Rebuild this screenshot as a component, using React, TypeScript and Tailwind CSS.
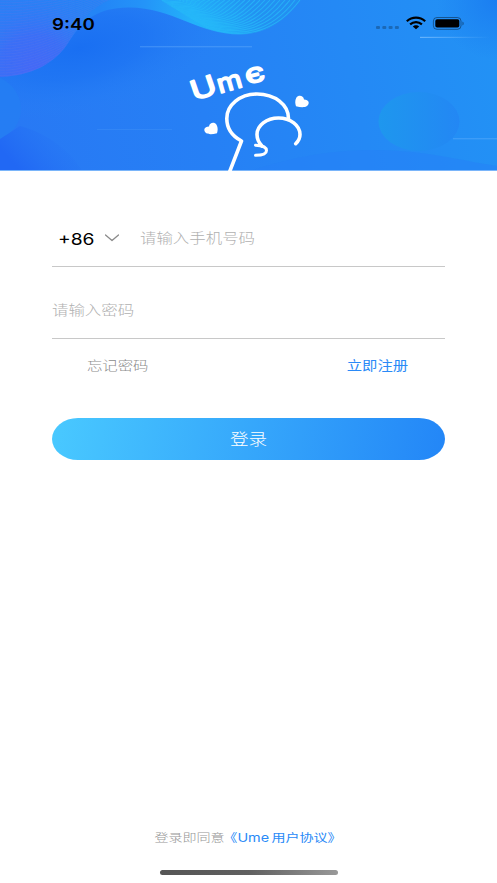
import React from "react";

const waveLines = Array.from({ length: 30 }, (_, i) => i);
const arcLines = Array.from({ length: 25 }, (_, i) => i);

function HeaderArt() {
  return (
    <svg
      className="absolute inset-0 h-full w-full"
      viewBox="0 0 497 171"
      preserveAspectRatio="none"
      fill="none"
      aria-hidden="true"
    >
      <defs>
        <linearGradient id="base" x1="0" y1="140" x2="497" y2="30" gradientUnits="userSpaceOnUse">
          <stop offset="0" stopColor="#2878f4" />
          <stop offset="0.4" stopColor="#2680f5" />
          <stop offset="1" stopColor="#2292f5" />
        </linearGradient>
        <radialGradient
          id="deep"
          cx="0"
          cy="0"
          r="1"
          gradientUnits="userSpaceOnUse"
          gradientTransform="translate(80 48) rotate(-12) scale(150 65)"
        >
          <stop offset="0" stopColor="#196ff2" />
          <stop offset="0.45" stopColor="#1d74f3" stopOpacity="0.75" />
          <stop offset="1" stopColor="#2680f5" stopOpacity="0" />
        </radialGradient>
        <linearGradient id="wave" x1="0" y1="0" x2="301" y2="0" gradientUnits="userSpaceOnUse">
          <stop offset="0" stopColor="#2a80f6" />
          <stop offset="0.33" stopColor="#2385f6" />
          <stop offset="0.48" stopColor="#2494f8" />
          <stop offset="0.64" stopColor="#23b2fa" />
          <stop offset="0.78" stopColor="#22aef8" />
          <stop offset="1" stopColor="#2490f4" />
        </linearGradient>
        <radialGradient id="violet" cx="35" cy="72" r="82" gradientUnits="userSpaceOnUse">
          <stop offset="0" stopColor="#4568f7" />
          <stop offset="0.45" stopColor="#3d6cf7" stopOpacity="0.85" />
          <stop offset="1" stopColor="#2b80f5" stopOpacity="0" />
        </radialGradient>
        <linearGradient id="mesh" x1="215" y1="30" x2="245" y2="0" gradientUnits="userSpaceOnUse">
          <stop offset="0" stopColor="#228df0" stopOpacity="0" />
          <stop offset="1" stopColor="#228df0" stopOpacity="0.8" />
        </linearGradient>
        <linearGradient id="oval" x1="378" y1="0" x2="460" y2="0" gradientUnits="userSpaceOnUse">
          <stop offset="0" stopColor="#1e97ee" />
          <stop offset="1" stopColor="#2387f4" />
        </linearGradient>
        <linearGradient id="corner" x1="15" y1="165" x2="60" y2="125" gradientUnits="userSpaceOnUse">
          <stop offset="0" stopColor="#2168f4" />
          <stop offset="1" stopColor="#2674f4" stopOpacity="0" />
        </linearGradient>
        <linearGradient id="streak">
          <stop offset="0" stopColor="#7cc0ff" stopOpacity="0.75" />
          <stop offset="1" stopColor="#7cc0ff" stopOpacity="0" />
        </linearGradient>
        <radialGradient id="topRight" cx="497" cy="0" r="60" gradientUnits="userSpaceOnUse">
          <stop offset="0" stopColor="#1b7ef1" />
          <stop offset="1" stopColor="#1b7ef1" stopOpacity="0" />
        </radialGradient>
        <clipPath id="waveClip">
          <path d="M0 0H110C90 8 78 24 70 40C56 64 30 76 0 77Z" />
        </clipPath>
        <clipPath id="meshClip">
          <path d="M160 0C188 22 212 34 240 34.500C268 34 286 19 301 0Z" />
        </clipPath>
      </defs>

      <rect width="497" height="171" fill="url(#base)" />
      <rect width="260" height="171" fill="url(#deep)" />
      <rect x="430" width="67" height="60" fill="url(#topRight)" />
      <path d="M0 78C14 84 21 97 21 109C21 123 12 134 0 139Z" fill="#247ff2" fillOpacity="0.7" />
      <path d="M0 139L20 126C48 133 72 153 82 171H0Z" fill="url(#corner)" />
      <path d="M250 171C300 154 350 147 400 151C440 154 470 162 497 166V171Z" fill="#2680f8" fillOpacity="0.5" />

      <path
        d="M0 0V77C30 76 56 64 70 40C84 19 98 8 128 7.500C172 7 198 34.500 240 34.500C268 34 286 19 301 0Z"
        fill="url(#wave)"
      />
      <path d="M0 0V77C30 76 56 64 70 40C84 19 98 8 128 7.500V0Z" fill="url(#violet)" />
      <g clipPath="url(#waveClip)" stroke="#5a78e8" strokeOpacity="0.4" strokeWidth="0.8">
        {waveLines.map((i) => (
          <path key={i} d={`M0 ${i * 2.7}C30 ${i * 2.7 + 1} 60 ${i * 2.3 - 4} 110 ${i * 1.5 - 16}`} />
        ))}
      </g>

      <path d="M160 0C188 22 212 34 240 34.500C268 34 286 19 301 0Z" fill="url(#mesh)" />
      <g clipPath="url(#meshClip)" stroke="#27b8f8" strokeWidth="1.1" strokeOpacity="0.75">
        {arcLines.map((i) => (
          <path
            key={i}
            d={`M${205 - i * 1.8} ${27 - i * 1.1}C${245 - i * 2} ${42 - i * 1.6} ${278 - i * 4.5} ${30 - i * 1.4} ${300 - i * 5} 0`}
          />
        ))}
      </g>

      <ellipse cx="419" cy="121.500" rx="40.500" ry="29.500" fill="url(#oval)" />
      <rect x="140" y="46" width="112" height="1.4" fill="#7cbcff" fillOpacity="0.3" />
      <rect x="97" y="129" width="75" height="0.8" fill="#7cbcff" fillOpacity="0.18" />
      <rect x="420" y="36.800" width="70" height="1.2" fill="url(#streak)" />
      <rect x="453" y="138" width="44" height="1.4" fill="#7cbcff" fillOpacity="0.3" />
      <rect y="170" width="497" height="1" fill="#7ab5fa" />

      {/* brand mark */}
      <g stroke="#fff" strokeWidth="3.6" strokeLinecap="round" strokeLinejoin="round">
        <path d="M229.5 172L241.5 141C232 136 226.8 128 226.8 118.5C226.8 105 240 94 257 94C275 94 288.5 105 288.5 118.5" />
        <path d="M295.7 143.7C298.5 141 300 137.500 300 134.500C300 125.500 290.500 118 278.500 118C266.500 118 257 125.500 257 134.500C257 139 259 143 262 146" />
        <path d="M255.500 145.300C263 145.500 266.500 148 266.500 150.500C266.500 153.500 262 155.300 255.500 155.300" strokeWidth="3" />
      </g>
      <g fill="#fff">
        <path d="M217 133.300C212 134.500 208 134.500 206 133C203 130.500 204 126.500 209 126.500C209.500 122.500 214.500 121.500 216.500 124.800C218.200 127.500 217.800 131 217 133.300Z" />
        <path d="M296 106.300C301 107.500 305 107.500 307 106C310 103.500 309 99.500 304 99.500C303.500 95.500 298.500 94.500 296.300 97.800C294.700 100.500 295.200 104 296 106.300Z" />
      </g>
      <g
        fill="#fff"
        stroke="#fff"
        strokeLinejoin="round"
        strokeLinecap="round"
        strokeWidth="1.6"
        fontFamily="Inter, 'Liberation Sans', sans-serif"
        fontWeight="400"
      >
        <text transform="translate(194 101) rotate(-19) scale(1.3 1)" fontSize="27">
          U
        </text>
        <text transform="translate(219.500 93.500) rotate(-16) scale(1.13 1)" fontSize="25.500">
          m
        </text>
        <text transform="translate(247 84.500) rotate(-14) scale(1.3 1)" fontSize="27">
          є
        </text>
      </g>
    </svg>
  );
}

function StatusBar() {
  return (
    <div className="relative flex h-[47px] items-center justify-between pr-8 pl-[52px] text-black">
      <span className="origin-left scale-x-[1.17] font-[Inter,sans-serif] text-[16px] leading-none font-semibold">
        9:40
      </span>
      <svg width="90" height="16" viewBox="0 0 90 16" fill="none">
        <g fill="#000" fillOpacity="0.25">
          <rect x="1" y="10" width="4" height="3" rx="1" />
          <rect x="7.300" y="10" width="4" height="3" rx="1" />
          <rect x="13.600" y="10" width="4" height="3" rx="1" />
          <rect x="19.900" y="10" width="4" height="3" rx="1" />
        </g>
        <g stroke="#000" strokeWidth="2.200">
          <path d="M31.800 5.200C37.200 .4 44.800 .4 50.200 5.200" />
          <path d="M35.100 8.400C38.500 5.400 43.500 5.400 46.900 8.400" />
        </g>
        <path d="M37.800 10.500C39.500 8.800 42.500 8.800 44.200 10.500L41 13.300Z" fill="#000" />
        <rect x="58.400" y="1.500" width="27.600" height="11.800" rx="3.500" stroke="#000" strokeOpacity="0.4" />
        <rect x="60.300" y="3.200" width="24" height="8.400" rx="1.800" fill="#000" />
        <path d="M87.500 5.500V9.500C89 9 89 6 87.500 5.500Z" fill="#000" fillOpacity="0.45" />
      </svg>
    </div>
  );
}

export default function App() {
  return (
    <div className="flex h-[883px] w-[497px] flex-col overflow-hidden bg-white font-['Noto_Sans_CJK_SC',sans-serif] leading-none">
      <header className="relative h-[171px] shrink-0">
        <HeaderArt />
        <StatusBar />
      </header>

      <main className="mx-[52px] flex flex-1 flex-col">
        <div className="flex h-24 items-end border-b border-[#c8c8c8]">
          <div className="flex h-14 w-full items-center">
            <span className="w-[53px] pl-[6px]">
              <span className="inline-block origin-left scale-x-[1.2] font-[Inter,sans-serif] text-[16px] text-black">
                +86
              </span>
            </span>
            <svg width="14" height="8" viewBox="0 0 14 8" fill="none" stroke="#8a8a8a" strokeWidth="1.300">
              <path d="M.5 1L7 6.500L13.500 1" strokeLinecap="round" strokeLinejoin="round" />
            </svg>
            <span className="ml-[21px] origin-left scale-x-[1.2] text-[13.7px] font-light text-[#b0b0b0]">
              请输入手机号码
            </span>
          </div>
        </div>
        <div className="flex h-[72px] items-end border-b border-[#c8c8c8]">
          <div className="flex h-[57px] items-center">
            <span className="origin-left scale-x-[1.2] text-[13.7px] font-light text-[#b0b0b0]">
              请输入密码
            </span>
          </div>
        </div>

        <div className="mt-5 flex justify-between pr-[37px] pl-[35px] text-[12.8px]">
          <span className="origin-left scale-x-[1.2] font-light text-[#8c8c8c]">忘记密码</span>
          <span className="origin-right scale-x-[1.2] text-[#2a8af7]">立即注册</span>
        </div>

        <button
          type="button"
          className="mt-[46px] flex h-[42px] items-center justify-center rounded-[26px/21px] bg-linear-[100deg] from-[#49c9ff] to-[#2386f7] text-white"
        >
          <span className="scale-x-[1.2] text-[15.5px] font-light">登录</span>
        </button>
      </main>

      <footer className="flex flex-col items-center">
        <p className="scale-x-[1.2] text-[11.7px] whitespace-nowrap text-[#2a8af7]">
          <span className="font-light text-[#969696]">登录即同意</span>
          <span className="-ml-px">《</span>
          <span className="font-[Inter,sans-serif] text-[12px]">Ume</span>
          <span className="ml-[2px]">用户协议》</span>
        </p>
        <div className="mt-[26px] mb-2 h-[5px] w-[178px] rounded-full bg-linear-to-r from-[#555555] via-[#606060] to-[#999999]" />
      </footer>
    </div>
  );
}
